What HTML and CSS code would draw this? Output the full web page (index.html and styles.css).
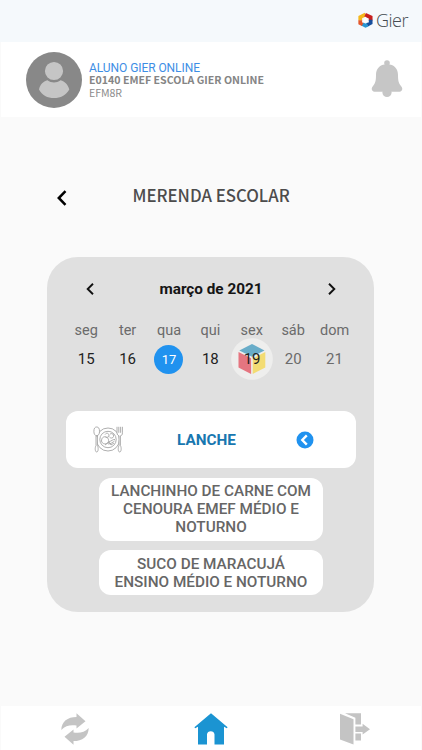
FILE: index.html
```html
<!DOCTYPE html>
<html lang="pt-BR">
<head>
<meta charset="utf-8">
<title>Merenda Escolar</title>
<link rel="stylesheet" href="styles.css">
</head>
<body>
<div class="app">
  <header class="brand">
    <svg class="brand-logo" viewBox="0 0 16 16">
      <g fill="none" stroke-width="4">
        <path d="M2.400 8.600V4.900L8 2.200" stroke="#f5b81c"/>
        <path d="M7.600 2.400L13.500 5V8.500" stroke="#c8201d"/>
        <path d="M13.500 7.800v3.400L9.600 13.300" stroke="#174f9c"/>
        <path d="M10.200 13l-2.200 1-3.800-1.900" stroke="#2a96d2"/>
        <path d="M5 12.600l-2.600-1.300V8.200" stroke="#e4572c"/>
      </g>
      <path d="M8 4.200l3.600 6.400H4.400z" fill="#fff"/>
    </svg>
    <span class="brand-name">Gier</span>
  </header>
  <section class="profile">
    <svg class="avatar" viewBox="0 0 56 56">
      <circle cx="28" cy="28" r="28" fill="#888"/>
      <path d="M13 37.500c1-5 4-8 8.500-9.300 4 3 9 3 13 0C39 29.500 42 32.500 43.300 37.500 40 43.500 34.500 46 28 46S16 43.500 13 37.500z" fill="#c5c5c5"/>
      <circle cx="28" cy="19" r="9.800" fill="#c5c5c5" stroke="#888" stroke-width="1.400"/>
    </svg>
    <div class="who">
      <div class="student">ALUNO GIER ONLINE</div>
      <div class="school">E0140 EMEF ESCOLA GIER ONLINE</div>
      <div class="grade">EFM8R</div>
    </div>
    <svg class="bell" viewBox="0 0 32 38" fill="#c6c6c6">
      <circle cx="16" cy="3" r="2.800"/>
      <circle cx="16" cy="32.500" r="4.600"/>
      <path d="M16 4.300c7.500 0 11 4.800 11 10.700 0 6 .8 8.500 3 11 2.500 2.500 1 5.700-1.500 5.700h-25C1 31.700-.5 28.500 2 26c2.200-2.500 3-5 3-11 0-5.900 3.500-10.700 11-10.700z"/>
    </svg>
  </section>
  <main class="content">
    <div class="title-row">
      <svg class="back" viewBox="0 0 10 16"><path d="M8.500 1.200L1.800 8l6.700 6.800" fill="none" stroke="#000" stroke-width="2.500"/></svg>
      <h1 class="title">MERENDA ESCOLAR</h1>
    </div>
    <section class="panel">
      <div class="month">
        <svg class="chev" viewBox="0 0 8 12"><path d="M7 .8L1.700 6 7 11.200" fill="none" stroke="#111" stroke-width="1.900"/></svg>
        <span class="month-name">março de 2021</span>
        <svg class="chev" viewBox="0 0 8 12"><path d="M1 .8L6.300 6 1 11.200" fill="none" stroke="#111" stroke-width="1.900"/></svg>
      </div>
      <div class="week names">
        <span>seg</span><span>ter</span><span>qua</span><span>qui</span><span>sex</span><span>sáb</span><span>dom</span>
      </div>
      <div class="week days">
        <span>15</span><span>16</span><span><b class="selected">17</b></span><span>18</span>
        <span class="marked"><svg class="cube" viewBox="0 0 42 42">
          <circle cx="21" cy="21" r="20.800" fill="#eeeeed"/>
          <path d="M21 6l12.500 6.500L21 18.800 8.300 12.500z" fill="#69adc9"/>
          <path d="M7.500 14l12.600 6.300V36L7.500 29.500z" fill="#e57580"/>
          <path d="M34.300 14l-12.600 6.300V36l12.600-6.500z" fill="#f3dc73"/>
        </svg><i class="marked-num">19</i></span>
        <span class="weekend">20</span><span class="weekend">21</span>
      </div>
      <div class="meal">
        <svg class="plate" viewBox="0 0 30 27" fill="none" stroke="#999" stroke-width=".8">
          <circle cx="15" cy="13.500" r="11.500"/><circle cx="15" cy="13.500" r="8.200"/>
          <path d="M8.500 15c0-3 2-5 4.500-4 2 .8 3.500 3 2 5.500-1.500 2-6 2-6.500-1.500zM12 8.500c1.500-2 3.500-1.500 4 .5s-2 3-3.500 2M17 8c2-1 4 0 3.500 2.500-.5 2-3 2-4 .5M15.500 16c3-1 5-3 6.500-2.500M15 18c3 0 5-2 6.500-3M12 19l4-3 2 3 3-2"/>
          <g fill="#fff"><ellipse cx="3.700" cy="5.300" rx="2.800" ry="4.300"/><path d="M3 10h1.400v9.500c1.200 2 1 6.500-.7 6.500s-1.900-4.500-.7-6.500zM24 .800v6c0 2 1.200 2.700 2 3v9.700c-1.200 2-1 6.500.700 6.500s1.900-4.500.700-6.500V9.800c1.400-.3 2-1 2-3v-6M25.800.8v6M27.600.8v6"/></g>
        </svg>
        <span class="meal-name">LANCHE</span>
        <svg class="toggle" viewBox="0 0 18 18"><circle cx="9" cy="9" r="8.500" fill="#2092ef"/><path d="M10.800 4.400L6.300 9l4.500 4.600" fill="none" stroke="#fff" stroke-width="2.400"/></svg>
      </div>
      <div class="dish dish-tall">LANCHINHO DE CARNE COM<br>CENOURA EMEF MÉDIO E<br>NOTURNO</div>
      <div class="dish">SUCO DE MARACUJÁ<br>ENSINO MÉDIO E NOTURNO</div>
    </section>
  </main>
  <nav class="tabs">
    <svg class="sync" viewBox="0 0 28 32" fill="#c4c4c4">
      <path d="M.3 17C.5 8.500 6.500 3.900 15.500 3.900V.3l9 8-9 7.300v-3.200C9 11.600 4.500 12.500.3 17z"/>
      <path d="M27.700 15C27.500 23.500 21.500 28.100 12.500 28.100v3.600L3.500 23.700l9-7.300v3.200c6.500.8 11-.1 15.200-4.600z"/>
    </svg>
    <svg class="home" viewBox="0 0 34 32" fill="#1b94d2"><path d="M17 .2l16.600 14-.8 1.100-2.800-1.600v17.800h-9.500V21.500c0-4.500-7.500-4.500-7.500 0v10H4V13.700l-2.800 1.600-.8-1.100z"/></svg>
    <svg class="exit" viewBox="0 0 31 32" fill="#c4c4c4">
      <path d="M0 .8l13.500 5.400V31.500L0 26.500z"/>
      <path d="M5 .3h16v11.200h-5.600V4.700zM15.400 20.500H21v7h-5.600zM15.400 13.600h7.200V10.800l7.400 5.400-7.400 5.400v-2.700h-7.200z"/>
    </svg>
  </nav>
</div>
</body>
</html>
```
FILE: styles.css
```css
* { box-sizing: border-box; }
body { margin: 0; background: #fafafa; font-family: Roboto, sans-serif; }
svg { display: block; flex: none; }
.app { height: 750px; display: flex; flex-direction: column; overflow: hidden; }

.brand { height: 42px; background: #f5f9fc; display: flex; align-items: center; padding: 0 0 2px 358px; gap: 3px; }
.brand-logo { width: 15px; height: 16px; }
.brand-name { font: 300 18px/20px "Open Sans", sans-serif; letter-spacing: -.5px; color: #444b50; }

.profile { height: 75px; margin: 0 1px; background: #fff; display: flex; align-items: center; padding: 0 18px 0 25px; }
.avatar { width: 56px; height: 56px; }
.who { flex: 1; margin: 1px 0 0 7px; white-space: nowrap; }
.student { font-size: 12px; line-height: 12px; letter-spacing: -.07px; color: #3d8ee5; }
.school { font: 700 10.600px/12px "Noto Sans CJK SC", sans-serif; color: #858585; }
.grade { font: 400 10.600px/13px "Noto Sans CJK SC", sans-serif; letter-spacing: -.1px; color: #8c8c8c; }
.bell { width: 32px; height: 38px; margin-top: -1px; }

.content { flex: 1; }
.title-row { display: flex; align-items: center; height: 24px; margin-top: 66px; padding-left: 57px; }
.back { width: 10px; height: 16px; margin-top: 5px; }
.title { margin: 0 0 0 65.500px; font: 500 16.800px/24px "Noto Sans CJK SC", sans-serif; color: #4c4c4c; white-space: nowrap; }

.panel { width: 327px; height: 355px; margin: 50px 0 0 47px; border-radius: 31px; background: #e0e0e0; padding-top: 22px; }
.month { height: 20px; display: flex; align-items: center; justify-content: space-between; padding: 0 38px 0 39px; }
.chev { width: 8px; height: 12px; }
.month-name { font-size: 15.300px; font-weight: 700; color: #151515; }
.week { display: grid; grid-template-columns: repeat(7, 41.4px); padding-left: 18.500px; text-align: center; }
.names { margin-top: 22px; font-size: 14.500px; line-height: 20px; color: #6b6b6b; }
.days { height: 42px; margin-top: -3px; align-items: center; font-size: 15px; color: #222; }
.days .weekend { color: #6b6b6b; }
.selected { display: block; width: 29px; height: 29px; margin: 0 auto; border-radius: 50%; background: #2092ef; color: #fff; font-size: 13px; font-weight: 400; line-height: 29px; }
.marked { display: grid; place-items: center; }
.cube, .marked-num { grid-area: 1 / 1; }
.cube { width: 42px; height: 42px; }
.marked-num { font-style: normal; }

.meal { width: 290px; height: 57px; margin: 31px 0 0 19px; border-radius: 12px; background: #fff; display: flex; align-items: center; padding: 0 42px 0 27px; }
.plate { width: 30px; height: 27px; }
.meal-name { margin: 0 auto 0 54px; font-size: 15.300px; font-weight: 700; color: #1877b0; }
.toggle { width: 18px; height: 18px; }
.dish { width: 224px; height: 45px; margin: 9px 0 0 52px; border-radius: 12px; background: #fff; padding-top: 5px; text-align: center; font-size: 15.300px; font-weight: 500; line-height: 18px; color: #666; white-space: nowrap; }
.dish-tall { height: 63px; margin-top: 10px; padding-top: 4px; }

.tabs { height: 44px; margin: 0 1px; background: #fff; display: flex; padding: 7px 0 0 60px; }
.sync { width: 28px; height: 32px; }
.home { width: 34px; height: 32px; margin-left: 105px; }
.exit { width: 31px; height: 32px; margin-left: 112px; }
```
